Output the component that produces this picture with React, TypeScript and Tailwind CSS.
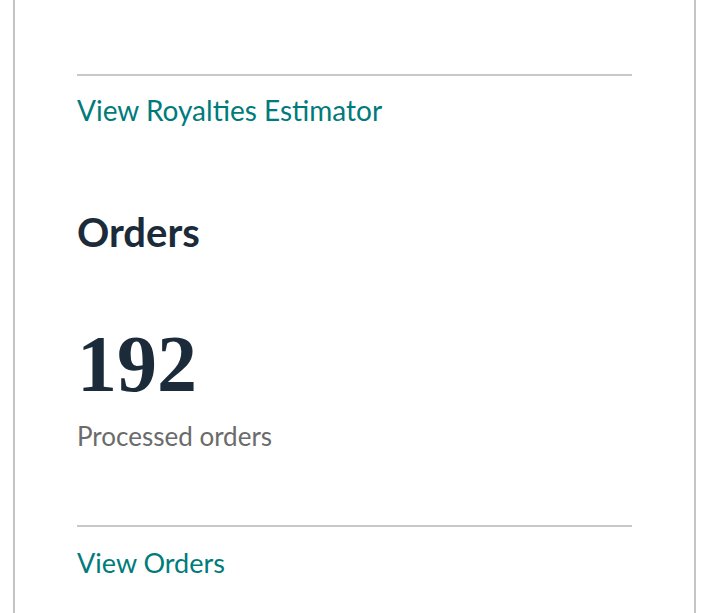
import React from "react";

const Divider: React.FC = () => <div className="h-[2px] bg-[#c8c8c8]" />;

const App: React.FC = () => {
    return (
        <div className="min-h-[613px] bg-white font-['Lato','Liberation_Sans',sans-serif]">
            <div className="ml-[13px] w-[683px] min-h-[613px] border-x-2 border-[#c4c4c4] bg-white px-[62px] pt-[74px]">
                <Divider />
                <a className="mt-[17px] block text-[28px] leading-[34px] text-[#007b7c]" href="#">
                    View Royalties Estimator
                </a>

                <h2 className="mt-[81px] text-[40px] font-bold leading-[48px] text-[#1c2b39]">
                    Orders
                </h2>

                <div className="mt-[68px] font-['Liberation_Serif',serif] text-[80px] font-bold leading-[80px] text-[#1c2b39]">
                    192
                </div>
                <p className="mt-[17px] text-[26px] leading-[30px] text-[#6b6b6b]">
                    Processed orders
                </p>

                <div className="mt-[74px]">
                    <Divider />
                </div>
                <a className="mt-[19px] block text-[27px] leading-[34px] text-[#007b7c]" href="#">
                    View Orders
                </a>
            </div>
        </div>
    );
};

export default App;
